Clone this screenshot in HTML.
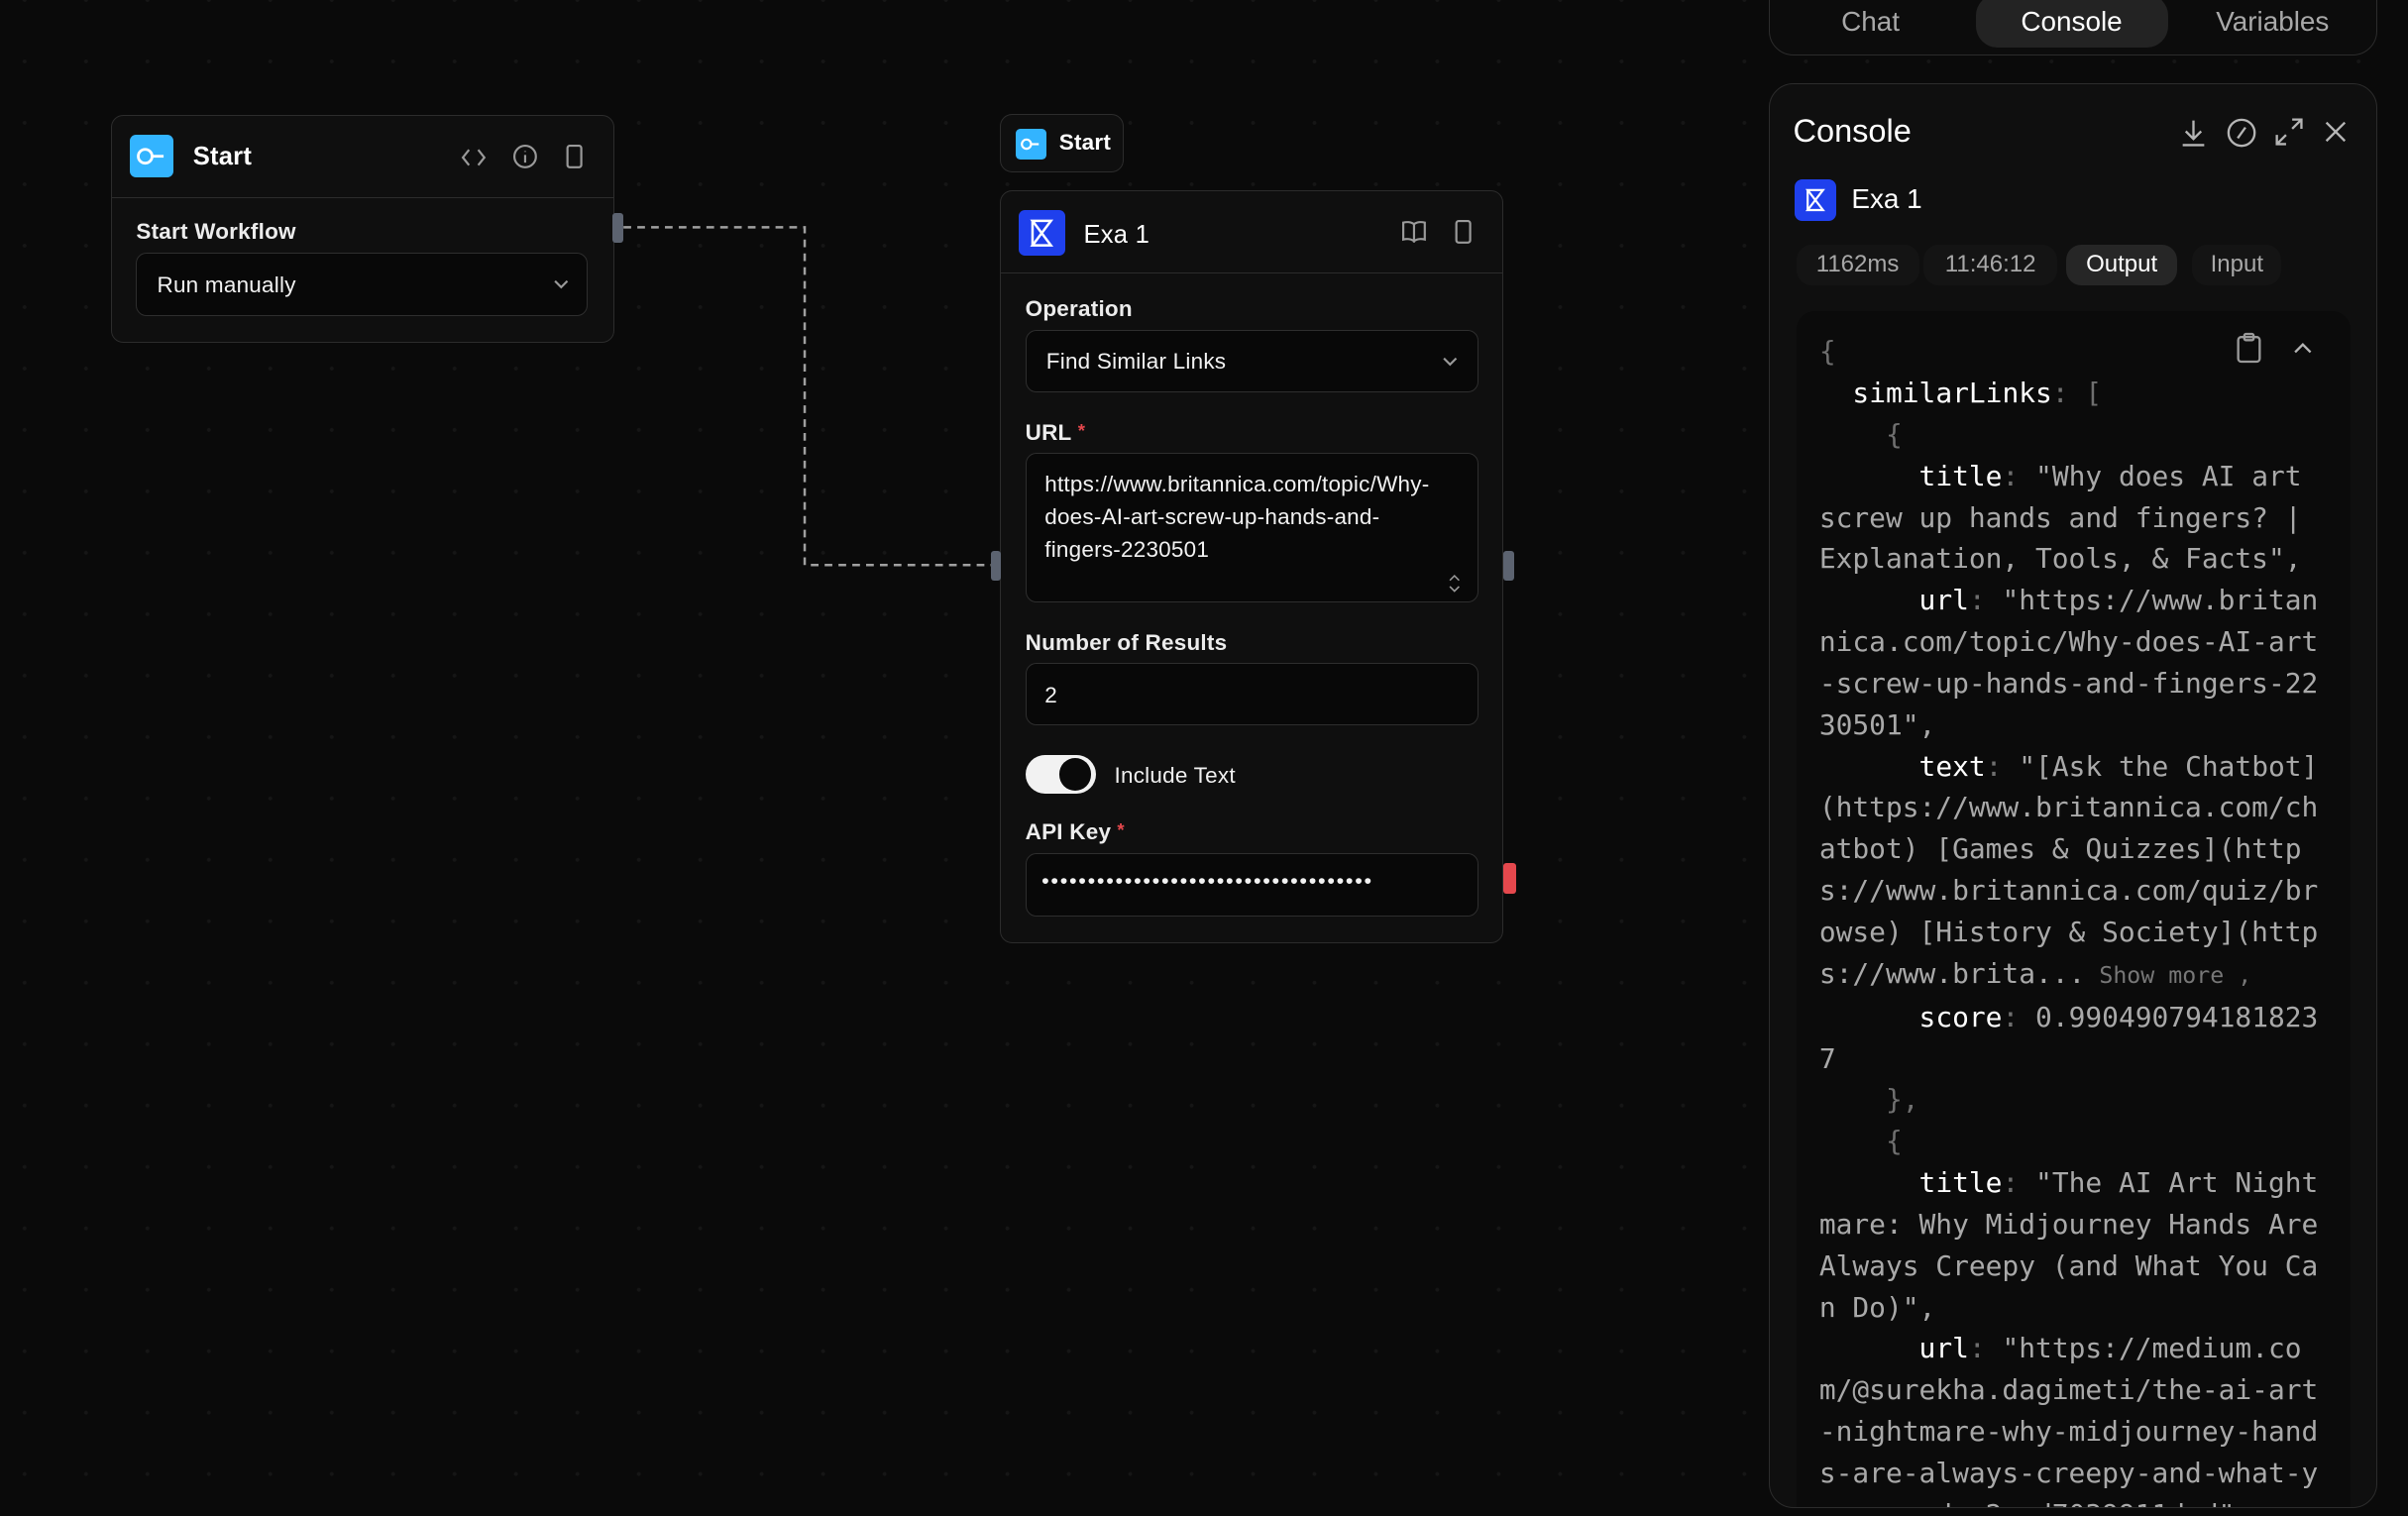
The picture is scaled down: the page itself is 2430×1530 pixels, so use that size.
<!DOCTYPE html>
<html><head><meta charset="utf-8">
<style>
html,body{margin:0;padding:0;background:#0a0a0a;overflow:hidden}
body{width:2430px;height:1530px}
#w{zoom:1.5497;width:1568px;height:988px;position:relative;font-family:"Liberation Sans",sans-serif;color:#fff;
background-color:#0a0a0a;background-image:radial-gradient(circle,#161616 1.1px,transparent 1.4px);background-size:40px 40px;background-position:-4px 20px;overflow:hidden}
.abs{position:absolute}
.node{position:absolute;background:#0f0f0f;border:1px solid #2c2c2c;border-radius:8px;box-sizing:border-box;letter-spacing:0.15px}
.hdr{height:53px;border-bottom:1px solid #2c2c2c;position:relative}
.lbl{position:absolute;font-size:14.5px;font-weight:bold;color:#ececec}
.inp{position:absolute;background:#080808;border:1px solid #2e2e2e;border-radius:7px;box-sizing:border-box;font-size:14.5px;color:#f2f2f2}
.star{color:#e5484d;font-size:12px;vertical-align:top;margin-left:4px}
.ic{position:absolute;stroke:#9a9a9a;fill:none;stroke-width:1.4}
.handle{position:absolute;width:7px;height:19px;background:#5c6370;border-radius:2px}
.code{font-family:"DejaVu Sans Mono","Liberation Mono",monospace;font-size:18px;line-height:27px;white-space:pre;color:#a9a9a9}
.k{color:#fff}.p{color:#6f6f6f}
</style></head><body><div id="w">

<svg class="abs" style="left:0;top:0" width="1150" height="988"><path d="M406 148 H524 V368 H648" stroke="#a0a0a0" stroke-width="1.6" stroke-dasharray="5 4" fill="none"/></svg>

<div class="node" style="left:72px;top:75px;width:328px;height:148px">
 <div class="hdr">
  <div class="abs" style="left:12px;top:12px;width:28px;height:28px;background:#33b4ff;border-radius:4px">
   <svg width="28" height="28"><circle cx="10" cy="14" r="4.5" stroke="#fff" stroke-width="1.8" fill="none"/><path d="M14.5 14H22" stroke="#fff" stroke-width="1.8"/></svg></div>
  <div class="abs" style="left:53px;top:17px;font-size:16.5px;font-weight:bold">Start</div>
  <svg class="ic" style="left:227px;top:18px" width="18" height="18"><path d="M6 4 2 9l4 5M12 4l4 5-4 5"/></svg>
  <svg class="ic" style="left:260px;top:17px" width="18" height="18"><circle cx="9" cy="9" r="7"/><path d="M9 8v5M9 5.5v.5"/></svg>
  <svg class="ic" style="left:294px;top:17px" width="16" height="18"><rect x="3" y="2" width="9" height="14" rx="1.5"/></svg>
 </div>
 <div class="lbl" style="left:16px;top:67px">Start Workflow</div>
 <div class="inp" style="left:16px;top:89px;width:294px;height:41px;padding:12px 0 0 13px">Run manually
  <svg class="ic" style="left:270px;top:15px" width="12" height="10"><path d="M2 3l4 4 4-4"/></svg></div>
</div>
<div class="handle" style="left:399px;top:139px"></div>

<div class="node" style="left:651px;top:74px;width:81px;height:38px;border-radius:8px">
 <div class="abs" style="left:10px;top:9px;width:20px;height:20px;background:#33b4ff;border-radius:3px">
  <svg width="20" height="20"><circle cx="7" cy="10" r="3" stroke="#fff" stroke-width="1.4" fill="none"/><path d="M10 10H15" stroke="#fff" stroke-width="1.4"/></svg></div>
 <div class="abs" style="left:38px;top:10px;font-size:14.5px;font-weight:bold">Start</div>
</div>

<div class="node" style="left:651px;top:124px;width:328px;height:490px">
 <div class="hdr">
  <div class="abs" style="left:12px;top:12px;width:30px;height:30px;background:#1f40ed;border-radius:4px">
   <svg width="30" height="30"><path d="M9 7H21L9 23H21Z" stroke="#fff" stroke-width="1.6" fill="none"/><path d="M9 7V23" stroke="#fff" stroke-width="1.6"/></svg></div>
  <div class="abs" style="left:54px;top:19px;font-size:16.5px">Exa 1</div>
  <svg class="ic" style="left:260px;top:17px" width="18" height="18"><path d="M9 4C7 2.5 4 2.5 2 3v11c2-.5 5-.5 7 1 2-1.5 5-1.5 7-1V3c-2-.5-5-.5-7 1zM9 4v12"/></svg>
  <svg class="ic" style="left:294px;top:17px" width="16" height="18"><rect x="3" y="2" width="9" height="14" rx="1.5"/></svg>
 </div>
 <div class="lbl" style="left:16px;top:68px">Operation</div>
 <div class="inp" style="left:16px;top:90px;width:295px;height:41px;padding:12px 0 0 13px">Find Similar Links
  <svg class="ic" style="left:270px;top:15px" width="12" height="10"><path d="M2 3l4 4 4-4"/></svg></div>
 <div class="lbl" style="left:16px;top:149px">URL<span class="star">*</span></div>
 <div class="inp" style="left:16px;top:170px;width:295px;height:98px;padding:9px 14px 0 12px;line-height:21.5px">https://www.britannica.com/topic/Why-does-AI-art-screw-up-hands-and-<br>fingers-2230501
  <svg class="ic" style="left:274px;top:78px;stroke-width:1" width="10" height="14"><path d="M2 5l3-3 3 3M2 9l3 3 3-3"/></svg></div>
 <div class="lbl" style="left:16px;top:286px">Number of Results</div>
 <div class="inp" style="left:16px;top:307px;width:295px;height:41px;padding:12px 0 0 12px">2</div>
 <div class="abs" style="left:16px;top:367px;width:46px;height:25px;background:#f2f2f2;border-radius:13px">
  <div class="abs" style="left:22px;top:2px;width:21px;height:21px;background:#0a0a0a;border-radius:50%"></div></div>
 <div class="abs" style="left:74px;top:372px;font-size:14.5px;color:#f0f0f0">Include Text</div>
 <div class="lbl" style="left:16px;top:409px">API Key<span class="star">*</span></div>
 <div class="inp" style="left:16px;top:431px;width:295px;height:41px;padding:9px 0 0 10px;font-size:14px;letter-spacing:1.1px">••••••••••••••••••••••••••••••••••••</div>
</div>
<div class="handle" style="left:645px;top:359px"></div>
<div class="handle" style="left:979px;top:359px"></div>
<div class="handle" style="left:979px;top:562px;width:8px;height:20px;background:#e5484d"></div>

<div class="abs" style="left:1152px;top:-20px;width:396px;height:56px;border:1px solid #2c2c2c;border-radius:16px;box-sizing:border-box;background:#0c0c0c"></div>
<div class="abs" style="left:1287px;top:-4px;width:125px;height:35px;background:#232323;border-radius:14px"></div>
<div class="abs" style="left:1199px;top:4px;font-size:18px;color:#a8a8a8">Chat</div>
<div class="abs" style="left:1316px;top:4px;font-size:18px;color:#fff">Console</div>
<div class="abs" style="left:1443px;top:4px;font-size:18px;color:#a8a8a8">Variables</div>

<div class="abs" style="left:1152px;top:54px;width:396px;height:928px;border:1px solid #2c2c2c;border-radius:16px;box-sizing:border-box;background:#0f0f0f;overflow:hidden">
 <div class="abs" style="left:15px;top:19px;font-size:21px;font-weight:500">Console</div>
 <svg class="ic" style="left:266px;top:21px;stroke:#b5b5b5;stroke-width:1.5" width="20" height="22"><path d="M10 3v12M5 10l5 5 5-5M3 19h14"/></svg>
 <svg class="ic" style="left:296px;top:21px;stroke:#b5b5b5;stroke-width:1.5" width="22" height="22"><circle cx="11" cy="11" r="8.5"/><path d="M13.5 7.5 8.5 14.5"/></svg>
 <svg class="ic" style="left:327px;top:20px;stroke:#b5b5b5;stroke-width:1.5" width="22" height="22"><path d="M13 3h6v6M19 3l-6 6M9 19H3v-6M3 19l6-6"/></svg>
 <svg class="ic" style="left:359px;top:22px;stroke:#b5b5b5;stroke-width:1.5" width="18" height="18"><path d="M3 3l12 12M15 3 3 15"/></svg>
 <div class="abs" style="left:16px;top:62px;width:27px;height:27px;background:#1f40ed;border-radius:5px">
  <svg width="27" height="27"><path d="M8.5 7H18.5L8.5 20H18.5Z" stroke="#fff" stroke-width="1.4" fill="none"/><path d="M8.5 7V20" stroke="#fff" stroke-width="1.4"/></svg></div>
 <div class="abs" style="left:53px;top:65px;font-size:18px">Exa 1</div>
 <div class="abs" style="left:17px;top:105px;width:80px;height:26px;background:#141414;border-radius:10px;color:#a8a8a8;font-size:15.5px;text-align:center;line-height:26px">1162ms</div>
 <div class="abs" style="left:100px;top:105px;width:87px;height:26px;background:#141414;border-radius:10px;color:#a8a8a8;font-size:15.5px;text-align:center;line-height:26px">11:46:12</div>
 <div class="abs" style="left:193px;top:105px;width:72px;height:26px;background:#262626;border-radius:10px;color:#fff;font-size:15.5px;text-align:center;line-height:26px">Output</div>
 <div class="abs" style="left:275px;top:105px;width:58px;height:26px;background:#141414;border-radius:10px;color:#a8a8a8;font-size:15.5px;text-align:center;line-height:26px">Input</div>
 <div class="abs" style="left:17px;top:148px;width:361px;height:800px;background:#0b0b0b;border-radius:12px"></div>
 <svg class="ic" style="left:302px;top:161px;stroke:#9a9a9a;stroke-width:1.5" width="20" height="22"><rect x="3" y="4" width="14" height="16" rx="2"/><rect x="7" y="2" width="6" height="4" rx="1"/></svg>
 <svg class="ic" style="left:340px;top:167px;stroke:#b5b5b5;stroke-width:1.5" width="14" height="10"><path d="M2 8l5-5 5 5"/></svg>
 <div class="abs code" style="left:32px;top:161px"><span class="p">{</span>
  <span class="k">similarLinks</span><span class="p">: [</span>
    <span class="p">{</span>
      <span class="k">title</span><span class="p">:</span> "Why does AI art
screw up hands and fingers? |
Explanation, Tools, &amp; Facts",
      <span class="k">url</span><span class="p">:</span> "https://www.britan
nica.com/topic/Why-does-AI-art
-screw-up-hands-and-fingers-22
30501",
      <span class="k">text</span><span class="p">:</span> "[Ask the Chatbot]
(https://www.britannica.com/ch
atbot) [Games &amp; Quizzes](http
s://www.britannica.com/quiz/br
owse) [History &amp; Society](http
s://www.brita...<span style="font-size:15px;color:#777"> Show more ,</span>
      <span class="k">score</span><span class="p">:</span> 0.990490794181823
7
    <span class="p">},</span>
    <span class="p">{</span>
      <span class="k">title</span><span class="p">:</span> "The AI Art Night
mare: Why Midjourney Hands Are
Always Creepy (and What You Ca
n Do)",
      <span class="k">url</span><span class="p">:</span> "https://medium.co
m/@surekha.dagimeti/the-ai-art
-nightmare-why-midjourney-hand
s-are-always-creepy-and-what-y
ou-can-do-2ccd7039911ded"</div>
</div>

</div></body></html>
